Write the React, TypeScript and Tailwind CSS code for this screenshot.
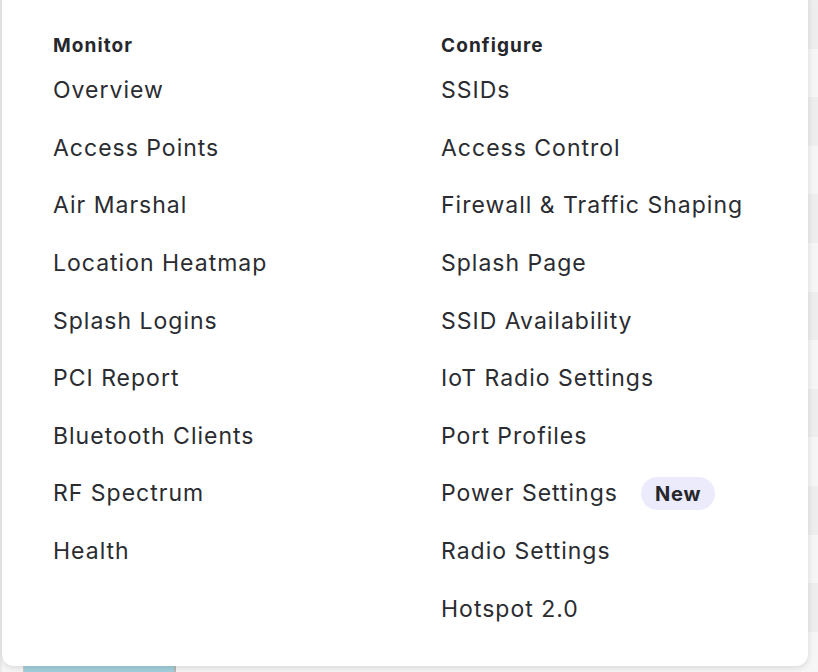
import React from "react";

const monitor = [
  "Overview",
  "Access Points",
  "Air Marshal",
  "Location Heatmap",
  "Splash Logins",
  "PCI Report",
  "Bluetooth Clients",
  "RF Spectrum",
  "Health",
];

const configure = [
  "SSIDs",
  "Access Control",
  "Firewall & Traffic Shaping",
  "Splash Page",
  "SSID Availability",
  "IoT Radio Settings",
  "Port Profiles",
  "Power Settings",
  "Radio Settings",
  "Hotspot 2.0",
];

function Column({ title, items }: { title: string; items: string[] }) {
  return (
    <div className="flex flex-col">
      <div className="h-[24px] flex items-center text-[19px] font-bold leading-none tracking-[1.1px] text-[#25272c]">
        {title}
      </div>
      <div className="flex flex-col pt-[5px]">
        {items.map((it) => (
          <div key={it} className="h-[57.6px] flex items-center gap-[23px] text-[23px] leading-none tracking-[1px] text-[#2a2c31]">
            <span>{it}</span>
            {it === "Power Settings" && (
              <span className="h-[33px] px-[14px] rounded-full bg-[#ebebfb] flex items-center text-[20px] font-bold tracking-[0.8px] text-[#25272c]">
                New
              </span>
            )}
          </div>
        ))}
      </div>
    </div>
  );
}

export default function App() {
  const stripes = Array.from({ length: 14 });
  return (
    <div
      className="relative w-[818px] h-[672px] overflow-hidden bg-[#ebebeb]"
      style={{ fontFamily: "Inter, 'Noto Sans', sans-serif" }}
    >
      <div className="flex flex-col pl-[2px]">
        {stripes.map((_, i) => (
          <div key={i} className={i % 2 === 0 ? "h-[48.6px] bg-[#eeeeee]" : "h-[48.6px] bg-[#f6f6f6]"} />
        ))}
      </div>
      <div className="absolute left-[23px] top-[666px] w-[153px] h-[20px] bg-[#a2d0dc] border-l border-[#c9c9c9] border-r-2 border-r-[#b8b8b8]" />
      <div className="absolute left-[2px] top-[-12px] w-[806px] h-[678px] rounded-[12px] bg-white shadow-[0_2px_6px_rgba(0,0,0,0.12)]">
        <div className="flex pt-[45px] pl-[51px]">
          <div className="w-[388px]">
            <Column title="Monitor" items={monitor} />
          </div>
          <Column title="Configure" items={configure} />
        </div>
      </div>
    </div>
  );
}
